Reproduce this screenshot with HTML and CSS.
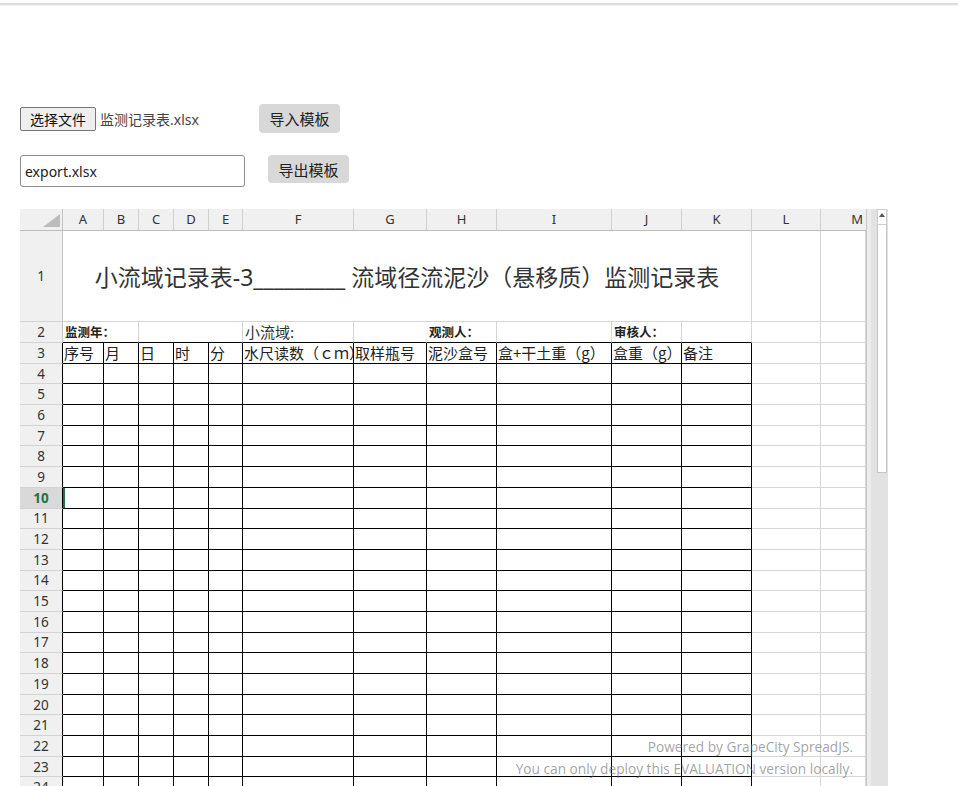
FILE: index.html
```html
<!DOCTYPE html>
<html lang="zh-CN">
<head>
<meta charset="utf-8">
<title>监测记录表</title>
<link rel="stylesheet" href="styles.css">
</head>
<body>
<div class="topline"></div>
<div class="page">
  <div class="ctl1">
    <button class="filebtn" type="button">选择文件</button>
    <span class="fname">监测记录表.xlsx</span>
    <button class="btn imp" type="button">导入模板</button>
  </div>
  <div class="ctl2">
    <input class="fileinput" type="text" value="export.xlsx">
    <button class="btn exp" type="button">导出模板</button>
  </div>
  <div class="sheet">
    <div class="grid">
      <div class="r hd">
        <div class="cn"><svg width="17" height="13" viewBox="0 0 17 13"><polygon points="17,0 17,13 0,13" fill="#bcbcbc"/></svg></div>
        <div class="ch">A</div><div class="ch">B</div><div class="ch">C</div><div class="ch">D</div><div class="ch">E</div><div class="ch">F</div><div class="ch">G</div><div class="ch">H</div><div class="ch">I</div><div class="ch">J</div><div class="ch">K</div><div class="ch">L</div><div class="ch last">M</div>
      </div>
      <div class="r t1">
        <div class="rh">1</div>
        <div class="title">小流域记录表-3_________ 流域径流泥沙（悬移质）监测记录表</div>
        <div></div><div></div>
      </div>
      <div class="r t2">
        <div class="rh">2</div>
        <div class="kb s2 lb">监测年：</div>
        <div class="kb s3"></div>
        <div class="kb lr">小流域:</div>
        <div class="kb nr"></div>
        <div class="kb lb">观测人：</div>
        <div class="kb"></div>
        <div class="kb lb">审核人：</div>
        <div class="kb"></div>
        <div></div><div></div>
      </div>
      <div class="r d">
        <div class="rh k0">3</div>
        <div class="k tx">序号</div><div class="k tx">月</div><div class="k tx">日</div><div class="k tx">时</div><div class="k tx">分</div><div class="k tx">水尺读数（ｃｍ）</div><div class="k tx">取样瓶号</div><div class="k tx">泥沙盒号</div><div class="k tx">盒+干土重（g）</div><div class="k tx">盒重（g）</div><div class="k tx">备注</div><div></div><div></div>
      </div>
      <div class="r d"><div class="rh k0">4</div><div class="k"></div><div class="k"></div><div class="k"></div><div class="k"></div><div class="k"></div><div class="k"></div><div class="k"></div><div class="k"></div><div class="k"></div><div class="k"></div><div class="k"></div><div></div><div></div></div>
      <div class="r d"><div class="rh k0">5</div><div class="k"></div><div class="k"></div><div class="k"></div><div class="k"></div><div class="k"></div><div class="k"></div><div class="k"></div><div class="k"></div><div class="k"></div><div class="k"></div><div class="k"></div><div></div><div></div></div>
      <div class="r d"><div class="rh k0">6</div><div class="k"></div><div class="k"></div><div class="k"></div><div class="k"></div><div class="k"></div><div class="k"></div><div class="k"></div><div class="k"></div><div class="k"></div><div class="k"></div><div class="k"></div><div></div><div></div></div>
      <div class="r d"><div class="rh k0">7</div><div class="k"></div><div class="k"></div><div class="k"></div><div class="k"></div><div class="k"></div><div class="k"></div><div class="k"></div><div class="k"></div><div class="k"></div><div class="k"></div><div class="k"></div><div></div><div></div></div>
      <div class="r d"><div class="rh k0">8</div><div class="k"></div><div class="k"></div><div class="k"></div><div class="k"></div><div class="k"></div><div class="k"></div><div class="k"></div><div class="k"></div><div class="k"></div><div class="k"></div><div class="k"></div><div></div><div></div></div>
      <div class="r d"><div class="rh k0">9</div><div class="k"></div><div class="k"></div><div class="k"></div><div class="k"></div><div class="k"></div><div class="k"></div><div class="k"></div><div class="k"></div><div class="k"></div><div class="k"></div><div class="k"></div><div></div><div></div></div>
      <div class="r d"><div class="rh k0 sel">10</div><div class="k act"></div><div class="k"></div><div class="k"></div><div class="k"></div><div class="k"></div><div class="k"></div><div class="k"></div><div class="k"></div><div class="k"></div><div class="k"></div><div class="k"></div><div></div><div></div></div>
      <div class="r d"><div class="rh k0">11</div><div class="k"></div><div class="k"></div><div class="k"></div><div class="k"></div><div class="k"></div><div class="k"></div><div class="k"></div><div class="k"></div><div class="k"></div><div class="k"></div><div class="k"></div><div></div><div></div></div>
      <div class="r d"><div class="rh k0">12</div><div class="k"></div><div class="k"></div><div class="k"></div><div class="k"></div><div class="k"></div><div class="k"></div><div class="k"></div><div class="k"></div><div class="k"></div><div class="k"></div><div class="k"></div><div></div><div></div></div>
      <div class="r d"><div class="rh k0">13</div><div class="k"></div><div class="k"></div><div class="k"></div><div class="k"></div><div class="k"></div><div class="k"></div><div class="k"></div><div class="k"></div><div class="k"></div><div class="k"></div><div class="k"></div><div></div><div></div></div>
      <div class="r d"><div class="rh k0">14</div><div class="k"></div><div class="k"></div><div class="k"></div><div class="k"></div><div class="k"></div><div class="k"></div><div class="k"></div><div class="k"></div><div class="k"></div><div class="k"></div><div class="k"></div><div></div><div></div></div>
      <div class="r d"><div class="rh k0">15</div><div class="k"></div><div class="k"></div><div class="k"></div><div class="k"></div><div class="k"></div><div class="k"></div><div class="k"></div><div class="k"></div><div class="k"></div><div class="k"></div><div class="k"></div><div></div><div></div></div>
      <div class="r d"><div class="rh k0">16</div><div class="k"></div><div class="k"></div><div class="k"></div><div class="k"></div><div class="k"></div><div class="k"></div><div class="k"></div><div class="k"></div><div class="k"></div><div class="k"></div><div class="k"></div><div></div><div></div></div>
      <div class="r d"><div class="rh k0">17</div><div class="k"></div><div class="k"></div><div class="k"></div><div class="k"></div><div class="k"></div><div class="k"></div><div class="k"></div><div class="k"></div><div class="k"></div><div class="k"></div><div class="k"></div><div></div><div></div></div>
      <div class="r d"><div class="rh k0">18</div><div class="k"></div><div class="k"></div><div class="k"></div><div class="k"></div><div class="k"></div><div class="k"></div><div class="k"></div><div class="k"></div><div class="k"></div><div class="k"></div><div class="k"></div><div></div><div></div></div>
      <div class="r d"><div class="rh k0">19</div><div class="k"></div><div class="k"></div><div class="k"></div><div class="k"></div><div class="k"></div><div class="k"></div><div class="k"></div><div class="k"></div><div class="k"></div><div class="k"></div><div class="k"></div><div></div><div></div></div>
      <div class="r d"><div class="rh k0">20</div><div class="k"></div><div class="k"></div><div class="k"></div><div class="k"></div><div class="k"></div><div class="k"></div><div class="k"></div><div class="k"></div><div class="k"></div><div class="k"></div><div class="k"></div><div></div><div></div></div>
      <div class="r d"><div class="rh k0">21</div><div class="k"></div><div class="k"></div><div class="k"></div><div class="k"></div><div class="k"></div><div class="k"></div><div class="k"></div><div class="k"></div><div class="k"></div><div class="k"></div><div class="k"></div><div></div><div></div></div>
      <div class="r d"><div class="rh k0">22</div><div class="k"></div><div class="k"></div><div class="k"></div><div class="k"></div><div class="k"></div><div class="k"></div><div class="k"></div><div class="k"></div><div class="k"></div><div class="k"></div><div class="k"></div><div></div><div></div></div>
      <div class="r d"><div class="rh k0">23</div><div class="k"></div><div class="k"></div><div class="k"></div><div class="k"></div><div class="k"></div><div class="k"></div><div class="k"></div><div class="k"></div><div class="k"></div><div class="k"></div><div class="k"></div><div></div><div></div></div>
      <div class="r d"><div class="rh k0">24</div><div class="k"></div><div class="k"></div><div class="k"></div><div class="k"></div><div class="k"></div><div class="k"></div><div class="k"></div><div class="k"></div><div class="k"></div><div class="k"></div><div class="k"></div><div></div><div></div></div>
      <div class="r d"><div class="rh k0">25</div><div class="k"></div><div class="k"></div><div class="k"></div><div class="k"></div><div class="k"></div><div class="k"></div><div class="k"></div><div class="k"></div><div class="k"></div><div class="k"></div><div class="k"></div><div></div><div></div></div>
      <div class="watermark">Powered by GrapeCity SpreadJS.<br>You can only deploy this EVALUATION version locally.</div>
    </div>
    <div class="vsb">
      <div class="up"><svg width="6" height="4" viewBox="0 0 6 4"><polygon points="3,0 6,4 0,4" fill="#555"/></svg></div>
      <div class="thumb"></div>
    </div>
  </div>
</div>
</body>
</html>
```
FILE: styles.css
```css
* { box-sizing: border-box; }
html, body { margin: 0; padding: 0; background: #fff; }
body { font-family: "Noto Sans CJK SC", "Noto Sans", sans-serif; color: #222; }

.topline { margin-top: 3px; height: 3px; background: #dedede; border-bottom: 1px solid #f1f1f1; }

.page { padding-left: 20px; }

.ctl1 { display: flex; align-items: center; height: 29px; margin-top: 98px; }
.filebtn {
  height: 24px; padding: 0 9px; margin: 0;
  border: 1px solid #767676; border-radius: 2px; background: #efefef;
  font-family: "Noto Sans CJK SC", sans-serif; font-size: 14px; color: #111; line-height: 20px;
}
.fname { margin-left: 4px; font-size: 14px; color: #444; font-family: "Noto Sans", "Noto Sans CJK SC", sans-serif; }
.btn {
  width: 81px; padding: 0; margin: 0; border: none; border-radius: 4px;
  background: #d8d8d8; color: #222;
  font-family: "Noto Sans CJK SC", sans-serif; font-size: 15px;
}
.imp { height: 29px; margin-left: 60px; }

.ctl2 { display: flex; align-items: flex-start; margin-top: 22px; }
.fileinput {
  width: 225px; height: 32px; margin: 0; padding: 0 4px;
  border: 1px solid #8d8d8d; border-radius: 3px;
  font-family: "Noto Sans", sans-serif; font-size: 14px; color: #222;
}
.exp { height: 28px; margin-left: 23px; }

.sheet { display: flex; margin-top: 22px; height: 577px; overflow: hidden; }
.grid { position: relative; width: 846px; overflow: hidden; }

.r {
  display: grid;
  grid-template-columns: 43px 41px 35px 35px 35px 34px 111px 73px 70px 115px 70px 70px 69px 45px;
}
.r > div {
  border-right: 1px solid #d6d6d6;
  border-bottom: 1px solid #d6d6d6;
  overflow: hidden;
  white-space: nowrap;
}
.hd { height: 22px; }
.t1 { height: 91px; }
.t2 { height: 21px; }
.d { height: 20.7px; }

.cn {
  background: #f0f0f0;
  display: flex; align-items: flex-end; justify-content: flex-end;
  padding: 0 2px 3px 0;
}
.r > .cn { border-right-color: #c4c4c4; border-bottom-color: #bdbdbd; }
.r > .ch {
  background: #f0f0f0; border-right-color: #d0d0d0; border-bottom-color: #bdbdbd;
  text-align: center; font-family: "Noto Sans", sans-serif; font-size: 13px; line-height: 21px; color: #333;
}
.r > .ch.last { text-align: right; padding-right: 3px; border-right: none; }
.r > .rh {
  background: #f0f0f0; border-right-color: #c4c4c4; border-bottom-color: #d3d3d3;
  display: flex; align-items: center; justify-content: center;
  font-family: "Noto Sans", sans-serif; font-size: 13.5px; color: #333;
}
.r > .rh.k0 { border-right-color: #000; }
.r > .rh.sel { background: #d9d9d9; color: #217346; font-weight: bold; }

.title {
  grid-column: span 11;
  display: flex; align-items: center; justify-content: center;
  font-family: "Noto Sans", "Noto Sans CJK SC", sans-serif; font-size: 23px; color: #333;
}
.s2 { grid-column: span 2; }
.s3 { grid-column: span 3; }
.r > .nr { border-right-color: transparent; }
.r > .kb { border-bottom-color: #000; }
.lb { font-size: 12.5px; font-weight: bold; padding-left: 2px; line-height: 20px; color: #222; }
.lr { font-size: 15px; padding-left: 2px; line-height: 20px; color: #333; }

.r > .k { border-right-color: #000; border-bottom-color: #000; }
.tx { font-size: 15px; line-height: 19px; padding-left: 1px; color: #222; }
.act { box-shadow: inset 2px 0 0 #217346; }

.watermark {
  position: absolute; right: 13px; top: 527px;
  text-align: right; white-space: nowrap;
  font-family: "Open Sans", sans-serif; font-size: 13.7px; line-height: 22px;
  color: rgba(105, 105, 105, 0.62);
}

.vsb {
  width: 22px; background: #e2e2e2;
  border-left: 1px solid #c8c8c8;
  box-shadow: inset 4px 0 0 #ececec;
  display: flex; flex-direction: column; align-items: flex-end;
  padding-right: 1px;
}
.vsb .up {
  width: 10px; height: 16px; background: #fff; border: 1px solid #cdcdcd;
  display: flex; justify-content: center; padding-top: 3px;
}
.vsb .thumb { width: 10px; height: 248px; background: #fff; border: 1px solid #c6c6c6; border-top: none; }
```
